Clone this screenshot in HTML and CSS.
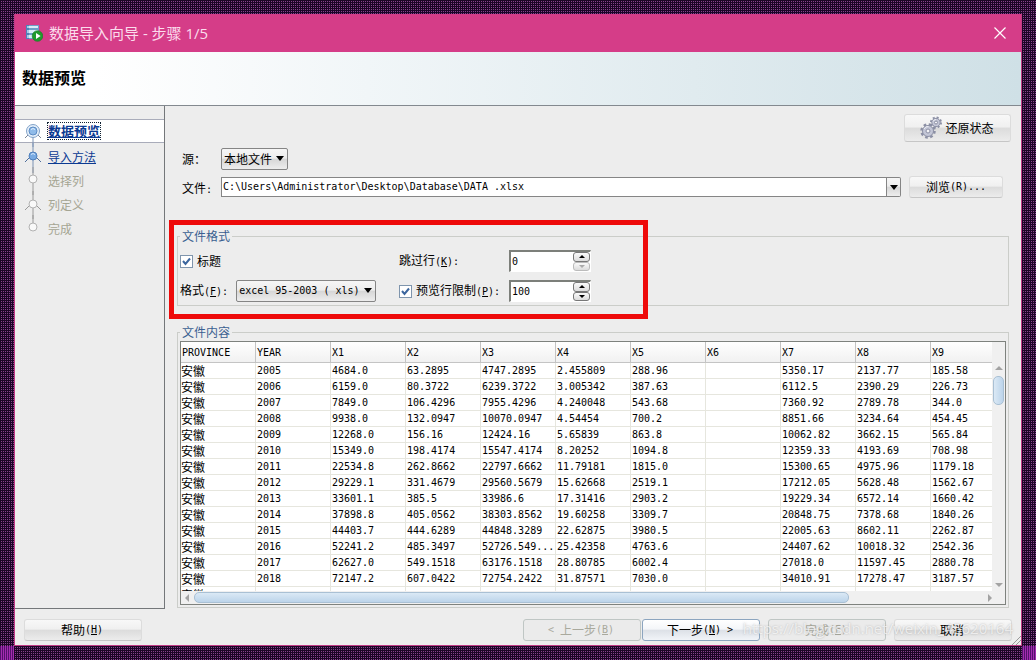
FILE: index.html
```html
<!DOCTYPE html>
<html lang="zh-CN">
<head>
<meta charset="utf-8">
<title>数据导入向导 - 步骤 1/5</title>
<link rel="stylesheet" href="styles.css">
</head>
<body>
<div class="corner corner-left"></div>
<div class="corner corner-right"></div>
<div class="window">
  <header class="titlebar">
    <svg class="app-icon" width="18" height="18" viewBox="0 0 18 18">
      <rect x="1" y="1" width="13" height="14" fill="#6f9fc8"/>
      <path d="M1 1h3v14H1z" fill="#4d82b8"/>
      <path d="M2 2h11v2H2zM2 6h11v3H2zM2 11h9v3H2z" fill="#d9edf8"/>
      <path d="M2 2h2v2H2zM2 6h2v3H2zM2 11h2v3H2z" fill="#a9cbe6"/>
      <circle cx="12.500" cy="12" r="5.300" fill="#1f9a2c" stroke="#137a22" stroke-width=".6"/>
      <path d="M11 9l4.600 3-4.600 3z" fill="#fff"/>
    </svg>
    <span class="title">数据导入向导 - 步骤 1/5</span>
    <button class="close" aria-label="关闭"><svg width="14" height="14" viewBox="0 0 14 14"><path d="M1.500 1.500l11 11M12.500 1.500l-11 11" stroke="#fff" stroke-width="1.200"/></svg></button>
  </header>
  <div class="banner"><h1>数据预览</h1></div>
  <div class="body">
    <nav class="steps">
      <ol>
        <li class="current">
          <svg width="18" height="24" viewBox="0 0 18 24"><path d="M9 17v11" stroke="#7c93b4"/><path d="M5 15l-4 4M13 15l4 4" stroke="#7c8797" fill="none"/><circle cx="9" cy="12" r="6.500" fill="#e4effa" stroke="#83a3c9"/><circle cx="9" cy="12" r="4" fill="#8fbbe9" stroke="#5d8cc4"/><path d="M7 10.500q2-2 4 0" stroke="#e4f2ff" fill="none"/></svg>
          <a href="#preview">数据预览</a>
        </li>
        <li class="next-step">
          <svg width="18" height="24" viewBox="0 0 18 24"><path d="M9-2v30" stroke="#7c93b4"/><path d="M1 17l5-5h6l5 5" stroke="#4f6f9c" fill="none"/><circle cx="9" cy="11" r="4" fill="#79aae2" stroke="#4f7fbc"/><path d="M7 9.500q2-2 4 0" stroke="#d8eaff" fill="none"/></svg>
          <a href="#method">导入方法</a>
        </li>
        <li>
          <svg width="18" height="24" viewBox="0 0 18 24"><path d="M9-2v28" stroke="#9a9a9a"/><circle cx="9" cy="10" r="4" fill="#f9f9f9" stroke="#b3b3b3"/></svg>
          <span>选择列</span>
        </li>
        <li>
          <svg width="18" height="24" viewBox="0 0 18 24"><path d="M9-2v28" stroke="#9a9a9a"/><path d="M1 17l5-5h6l5 5" stroke="#9a9a9a" fill="none"/><circle cx="9" cy="11" r="4" fill="#f9f9f9" stroke="#b3b3b3"/></svg>
          <span>列定义</span>
        </li>
        <li>
          <svg width="18" height="24" viewBox="0 0 18 24"><path d="M9-2v10" stroke="#9a9a9a"/><circle cx="9" cy="10" r="4" fill="#f9f9f9" stroke="#b3b3b3"/></svg>
          <span>完成</span>
        </li>
      </ol>
    </nav>
    <main class="content">
      <div class="toolbar">
        <button class="btn restore">
          <svg width="24" height="24" viewBox="0 0 24 24">
            <g fill="#c3c6d6" stroke="#8b8fa4">
              <circle cx="9" cy="15" r="6.500" stroke-width="2.500" stroke-dasharray="2.600 2.500" fill="none"/>
              <circle cx="9" cy="15" r="5.500"/>
              <circle cx="17" cy="6.500" r="5" stroke-width="2" stroke-dasharray="2 1.930" fill="none"/>
              <circle cx="17" cy="6.500" r="4.200"/>
              <circle cx="9" cy="15" r="2" fill="#f3f3f6"/>
              <circle cx="17" cy="6.500" r="1.500" fill="#f3f3f6"/>
            </g>
            <path d="M5 13q1.500-3 4.500-2.500M14 5.500q1-2 3-2" stroke="#edeef5" fill="none"/>
          </svg>
          <span>还原状态</span>
        </button>
      </div>
      <div class="source-row">
        <label for="source">源：</label>
        <span class="select-wrap"><select id="source"><option>本地文件</option></select><svg width="8" height="5" viewBox="0 0 8 5"><path d="M0 0h8L4 5z"/></svg></span>
      </div>
      <div class="file-row">
        <label for="file">文件<span class="lat">:</span></label>
        <div class="combo">
          <input id="file" type="text" value="C:\Users\Administrator\Desktop\Database\DATA .xlsx">
          <button aria-label="历史文件"><svg width="8" height="5" viewBox="0 0 8 5"><path d="M0 0h8L4 5z"/></svg></button>
        </div>
        <button class="btn browse">浏览<span class="lat">(R)...</span></button>
      </div>

      <section class="format-area">
        <fieldset class="format">
          <legend>文件格式</legend>
          <div class="format-grid">
            <div class="cell"><input type="checkbox" id="header" checked><label for="header">标题</label></div>
            <div class="cell"><label for="skip">跳过行<span class="lat">(<u>K</u>):</span></label></div>
            <div class="spin"><input id="skip" type="text" value="0"><span class="arrows"><button aria-label="增加"><svg width="6" height="3" viewBox="0 0 6 3"><path d="M0 3h6L3 0z"/></svg></button><button aria-label="减少" disabled><svg width="6" height="3" viewBox="0 0 6 3"><path d="M0 0h6L3 3z"/></svg></button></span></div>
            <div class="cell"><label for="format">格式<span class="lat">(<u>F</u>):</span></label><span class="select-wrap wide"><select id="format"><option>excel 95-2003 ( xls)</option></select><svg width="8" height="5" viewBox="0 0 8 5"><path d="M0 0h8L4 5z"/></svg></span></div>
            <div class="cell"><input type="checkbox" id="limit" checked><label for="limit">预览行限制<span class="lat">(<u>P</u>):</span></label></div>
            <div class="spin"><input aria-label="预览行限制" type="text" value="100"><span class="arrows"><button aria-label="增加"><svg width="6" height="3" viewBox="0 0 6 3"><path d="M0 3h6L3 0z"/></svg></button><button aria-label="减少"><svg width="6" height="3" viewBox="0 0 6 3"><path d="M0 0h6L3 3z"/></svg></button></span></div>
          </div>
        </fieldset>
        <div class="highlight"></div>
      </section>

      <fieldset class="preview">
        <legend>文件内容</legend>
        <div class="pane">
          <div class="view">
            <table>
              <thead><tr><th>PROVINCE</th><th>YEAR</th><th>X1</th><th>X2</th><th>X3</th><th>X4</th><th>X5</th><th>X6</th><th>X7</th><th>X8</th><th>X9</th></tr></thead>
              <tbody>
                <tr><td>安徽</td><td>2005</td><td>4684.0</td><td>63.2895</td><td>4747.2895</td><td>2.455809</td><td>288.96</td><td></td><td>5350.17</td><td>2137.77</td><td>185.58</td></tr>
                <tr><td>安徽</td><td>2006</td><td>6159.0</td><td>80.3722</td><td>6239.3722</td><td>3.005342</td><td>387.63</td><td></td><td>6112.5</td><td>2390.29</td><td>226.73</td></tr>
                <tr><td>安徽</td><td>2007</td><td>7849.0</td><td>106.4296</td><td>7955.4296</td><td>4.240048</td><td>543.68</td><td></td><td>7360.92</td><td>2789.78</td><td>344.0</td></tr>
                <tr><td>安徽</td><td>2008</td><td>9938.0</td><td>132.0947</td><td>10070.0947</td><td>4.54454</td><td>700.2</td><td></td><td>8851.66</td><td>3234.64</td><td>454.45</td></tr>
                <tr><td>安徽</td><td>2009</td><td>12268.0</td><td>156.16</td><td>12424.16</td><td>5.65839</td><td>863.8</td><td></td><td>10062.82</td><td>3662.15</td><td>565.84</td></tr>
                <tr><td>安徽</td><td>2010</td><td>15349.0</td><td>198.4174</td><td>15547.4174</td><td>8.20252</td><td>1094.8</td><td></td><td>12359.33</td><td>4193.69</td><td>708.98</td></tr>
                <tr><td>安徽</td><td>2011</td><td>22534.8</td><td>262.8662</td><td>22797.6662</td><td>11.79181</td><td>1815.0</td><td></td><td>15300.65</td><td>4975.96</td><td>1179.18</td></tr>
                <tr><td>安徽</td><td>2012</td><td>29229.1</td><td>331.4679</td><td>29560.5679</td><td>15.62668</td><td>2519.1</td><td></td><td>17212.05</td><td>5628.48</td><td>1562.67</td></tr>
                <tr><td>安徽</td><td>2013</td><td>33601.1</td><td>385.5</td><td>33986.6</td><td>17.31416</td><td>2903.2</td><td></td><td>19229.34</td><td>6572.14</td><td>1660.42</td></tr>
                <tr><td>安徽</td><td>2014</td><td>37898.8</td><td>405.0562</td><td>38303.8562</td><td>19.60258</td><td>3309.7</td><td></td><td>20848.75</td><td>7378.68</td><td>1840.26</td></tr>
                <tr><td>安徽</td><td>2015</td><td>44403.7</td><td>444.6289</td><td>44848.3289</td><td>22.62875</td><td>3980.5</td><td></td><td>22005.63</td><td>8602.11</td><td>2262.87</td></tr>
                <tr><td>安徽</td><td>2016</td><td>52241.2</td><td>485.3497</td><td>52726.549...</td><td>25.42358</td><td>4763.6</td><td></td><td>24407.62</td><td>10018.32</td><td>2542.36</td></tr>
                <tr><td>安徽</td><td>2017</td><td>62627.0</td><td>549.1518</td><td>63176.1518</td><td>28.80785</td><td>6002.4</td><td></td><td>27018.0</td><td>11597.45</td><td>2880.78</td></tr>
                <tr><td>安徽</td><td>2018</td><td>72147.2</td><td>607.0422</td><td>72754.2422</td><td>31.87571</td><td>7030.0</td><td></td><td>34010.91</td><td>17278.47</td><td>3187.57</td></tr>
                <tr><td>安徽</td><td></td><td></td><td></td><td></td><td></td><td></td><td></td><td></td><td></td><td></td></tr>
              </tbody>
            </table>
          </div>
          <div class="vbar">
            <svg width="8" height="4" viewBox="0 0 8 4"><path d="M0 4h8L4 0z" fill="#a3a3a3"/></svg>
            <span class="thumb"></span>
            <svg width="8" height="4" viewBox="0 0 8 4"><path d="M0 0h8L4 4z" fill="#a3a3a3"/></svg>
          </div>
          <div class="hbar">
            <svg width="4" height="8" viewBox="0 0 4 8"><path d="M4 0v8L0 4z" fill="#a3a3a3"/></svg>
            <span class="track"><span class="thumb"></span></span>
            <svg width="4" height="8" viewBox="0 0 4 8"><path d="M0 0v8l4-4z" fill="#a3a3a3"/></svg>
          </div>
        </div>
      </fieldset>
    </main>
  </div>
  <footer class="actions">
    <button class="btn help">帮助<span class="lat">(<u>H</u>)</span></button>
    <div class="pair">
      <button class="btn outlined" disabled><span class="lat">&lt; </span>上一步<span class="lat">(<u>B</u>)</span></button>
      <button class="btn default">下一步<span class="lat">(<u>N</u>) &gt;</span></button>
    </div>
    <button class="btn outlined" disabled>完成<span class="lat">(<u>F</u>)</span></button>
    <button class="btn">取消</button>
    <span class="watermark">https://blog.csdn.net/weixin_45620164</span>
    <svg class="grip" width="9" height="9" viewBox="0 0 9 9"><path d="M0 9L9 0M4 9l5-5" stroke="#999"/></svg>
  </footer>
</div>
</body>
</html>
```

FILE: styles.css
```css
* {
  box-sizing: border-box;
}

body {
  margin: 0;
  position: relative;
  display: flex;
  min-width: 1000px;
  height: 100vh;
  min-height: 600px;
  padding: 14px;
  background-color: #1c0526;
  background-image:
    repeating-linear-gradient(#1c0526 0 1px, transparent 1px 2px),
    repeating-linear-gradient(90deg, #1c0526 0 1px, #86418c 1px 2px);
  font-family: "Noto Sans CJK SC", sans-serif;
  font-size: 12px;
  line-height: 16px;
  color: #000;
}

button,
input,
select {
  margin: 0;
  padding: 0;
  font: inherit;
  color: inherit;
}

.lat,
.combo input,
.spin input,
.wide select,
table {
  font-family: "DejaVu Sans Mono", monospace;
  font-size: 10px;
}

.corner {
  position: absolute;
  bottom: 0;
  width: 14px;
  height: 14px;
  background: repeating-linear-gradient(90deg, #54126c 0 1px, #a42cb0 1px 2px);
}

.corner-left {
  left: 0;
}

.corner-right {
  right: 0;
}

.window {
  flex: 1;
  display: flex;
  flex-direction: column;
  min-width: 0;
  background: #ededed;
  border: 1px solid #c23a86;
  border-top: 0;
}

/* Title bar and banner */
.titlebar {
  display: flex;
  align-items: center;
  gap: 6px;
  height: 38px;
  padding: 0 14px 0 10px;
  background: #d53d88;
  color: #fbdcec;
}

.title {
  flex: 1;
  font-family: "Open Sans", "Noto Sans CJK SC", sans-serif;
  font-size: 15px;
  line-height: 20px;
}

.close {
  display: flex;
  border: 0;
  background: none;
}

.banner {
  display: flex;
  align-items: center;
  height: 54px;
  padding: 0 7px 4px;
  border-bottom: 1px solid #83898f;
  background: linear-gradient(90deg, #fff 8%, #f1f6f8 35%, #cfe0e6);
}

h1 {
  margin: 0;
  font-size: 16px;
  line-height: 24px;
}

.body {
  flex: 1;
  display: flex;
  min-height: 0;
}

/* Step list */
.steps {
  width: 150px;
  padding-top: 13px;
  border-right: 1px solid #74777a;
  border-bottom: 1px solid #74777a;
}

.steps ol {
  margin: 0;
  padding: 0;
  list-style: none;
}

.steps li {
  display: flex;
  align-items: center;
  gap: 6px;
  height: 24px;
  padding-left: 9px;
  color: #a5a593;
}

.steps svg {
  overflow: visible;
}

.steps a {
  color: #0b3a92;
}

.steps .current {
  margin-bottom: 2px;
  background: #fff;
  border: 1px solid #a9acba;
  border-width: 1px 0;
}

.current a {
  outline: 1px dotted #123;
  font-size: 13px;
  font-weight: bold;
}

/* Main content */
.content {
  flex: 1;
  display: flex;
  flex-direction: column;
  min-width: 0;
  padding: 8px 10px 1px 12px;
}

.btn {
  display: flex;
  align-items: center;
  justify-content: center;
  width: 118px;
  height: 22px;
  border: 1px solid #dcdcdc;
  border-bottom-color: #c6c6c6;
  border-radius: 3px;
  background: linear-gradient(#f8f8f8, #f0f0f0 45%, #dcdcdc 52%, #ececec);
  white-space: pre;
}

.btn:disabled {
  border-color: #bfc6c4;
  background: #ebebeb;
  color: #a9a99d;
}

.btn.default {
  border-color: #8ca5bf;
  background: linear-gradient(#fff, #f4f6f9 45%, #dde1e7 52%, #f1f4f8);
}

.toolbar {
  display: flex;
  justify-content: flex-end;
}

.restore {
  width: 107px;
  height: 28px;
  padding-right: 2px;
  gap: 2px;
}

.source-row,
.file-row {
  display: flex;
  align-items: center;
  padding-left: 5px;
}

.source-row {
  margin-top: 6px;
}

.file-row {
  margin: 6px 8px 0 0;
}

.source-row label,
.file-row label {
  width: 39px;
}

.file-row label {
  padding-top: 4px;
}

.select-wrap {
  position: relative;
  display: flex;
  width: 67px;
  height: 22px;
}

.select-wrap.wide {
  width: 140px;
}

.select-wrap select {
  width: 100%;
  padding-left: 2px;
  appearance: none;
  border: 1px solid #858585;
  border-radius: 2px;
  background: linear-gradient(#f6f6f6, #ededed 45%, #d7d7d7 52%, #ededed);
}

.select-wrap svg {
  position: absolute;
  top: 8px;
  right: 4px;
  pointer-events: none;
}

.combo {
  flex: 1;
  display: flex;
  height: 20px;
  margin-right: 8px;
}

.combo input {
  flex: 1;
  min-width: 0;
  padding-left: 1px;
  border: 1px solid #858585;
  background: #fff;
}

.combo button {
  display: flex;
  align-items: center;
  justify-content: center;
  width: 14px;
  border: 1px solid #858585;
  border-left: 0;
  border-radius: 0 2px 2px 0;
  background: linear-gradient(#f6f6f6, #ededed 45%, #d7d7d7 52%, #ededed);
}

.browse {
  width: 94px;
}

/* Group boxes */
fieldset {
  min-width: 0;
  margin: 0;
  border: 1px solid #cbcdc9;
}

legend {
  padding: 0 2px;
  color: #3a5f91;
}

.format-area {
  position: relative;
  margin: 30px 2px 0 0;
}

.format {
  height: 78px;
  padding: 0 2px;
}

.highlight {
  position: absolute;
  top: -8px;
  left: -8px;
  width: 479px;
  height: 99px;
  border: 5px solid #ee0a0a;
  pointer-events: none;
}

.format-grid {
  display: grid;
  grid-template-columns: 219px 110px 82px;
  grid-auto-rows: 22px;
  row-gap: 8px;
  padding-top: 6px;
}

.cell {
  display: flex;
  align-items: center;
}

.cell .select-wrap {
  margin-left: 8px;
}

input[type="checkbox"] {
  appearance: none;
  width: 13px;
  height: 13px;
  margin-right: 4px;
  border: 1px solid #7f95ad;
  background: #fff url('data:image/svg+xml,<svg xmlns="http://www.w3.org/2000/svg" viewBox="0 0 11 11"><path d="M2 5l2.500 3L9 2.500" fill="none" stroke="%233c669e" stroke-width="2"/></svg>');
}

.spin {
  display: flex;
  border: 1px solid #fff;
  border-top: 2px solid #7c7f7a;
  border-left: 2px solid #7c7f7a;
  background: #fff;
}

.spin input {
  flex: 1;
  min-width: 0;
  padding-left: 1px;
  border: 0;
  background: none;
}

.arrows {
  display: flex;
  flex-direction: column;
  width: 17px;
}

.arrows button {
  flex: 1;
  display: flex;
  align-items: center;
  justify-content: center;
  border: 1px solid #777;
  border-radius: 3px;
  background: linear-gradient(#fafafa, #dcdcdc);
}

.arrows button:disabled {
  border-color: #bbb;
  fill: #aaa;
}

/* Data preview */
.preview {
  flex: 1;
  display: flex;
  min-height: 0;
  margin: 18px 2px 0 0;
  padding: 1px 2px 2px;
}

.pane {
  flex: 1;
  display: grid;
  grid-template: minmax(0, 1fr) 13px / minmax(0, 1fr) 13px;
  border: 1px solid #7e827e;
  background: #f0f0f0;
}

.view {
  overflow: hidden;
  background: #fff;
}

table {
  width: 825px;
  table-layout: fixed;
  border-spacing: 0;
}

th,
td {
  height: 16px;
  padding: 1px 0 0 1px;
  border: 1px solid #e6e6de;
  border-width: 0 1px 1px 0;
  font-weight: normal;
  text-align: left;
  line-height: 14px;
  white-space: nowrap;
}

th {
  height: 21px;
  border-color: #c4c4c4;
  background: linear-gradient(#fff, #f1f1f1);
}

td:first-child {
  padding: 0;
  font-family: "Noto Sans CJK SC", sans-serif;
  font-size: 12px;
  line-height: 15px;
}

.vbar {
  display: flex;
  flex-direction: column;
  align-items: center;
  padding: 24px 0 4px;
}

.vbar .thumb {
  flex: none;
  width: 11px;
  height: 29px;
  margin: 6px 0 auto;
  border: 1px solid #a9c0d4;
  border-radius: 5px;
  background: linear-gradient(90deg, #dbe9f5, #bcd4ea);
}

.hbar {
  display: flex;
  align-items: center;
  gap: 5px;
  padding-left: 4px;
}

.hbar .track {
  flex: 1;
  display: flex;
}

.hbar .thumb {
  width: 83%;
  height: 11px;
  border: 1px solid #a9c0d4;
  border-radius: 5px;
  background: linear-gradient(#dbe9f5, #bcd4ea);
}

/* Footer */
.actions {
  position: relative;
  display: flex;
  align-items: center;
  gap: 8px;
  height: 36px;
  padding: 6px 9px 0;
}

.actions .btn {
  padding-right: 2px;
}

.help {
  margin-right: auto;
}

.pair {
  display: flex;
  gap: 1px;
}

.watermark {
  position: absolute;
  right: 8px;
  bottom: 7px;
  font-family: "Open Sans", sans-serif;
  font-size: 15px;
  line-height: 20px;
  color: rgba(255, 255, 255, 0.7);
  text-shadow: 0 0 2px rgba(120, 120, 120, 0.5);
  pointer-events: none;
}

.grip {
  position: absolute;
  right: 0;
  bottom: 0;
}
```
